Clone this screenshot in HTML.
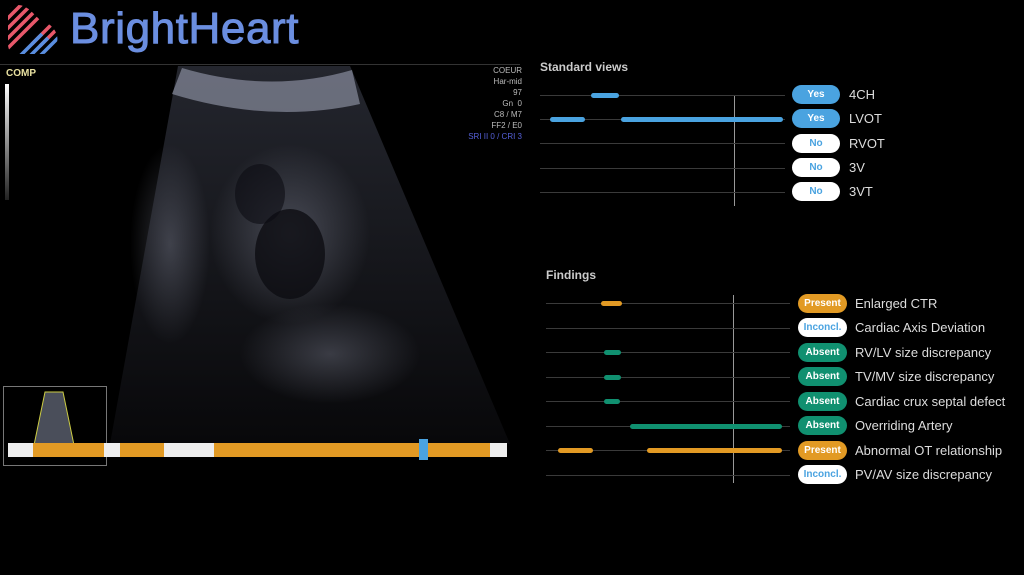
<!DOCTYPE html><html><head><style>
body{margin:0;width:1024px;height:575px;background:#000;overflow:hidden;position:relative;font-family:"Liberation Sans",sans-serif}
.a{position:absolute}
.ln{position:absolute;height:1px;background:#3a3a3a}
.bar{position:absolute;height:5px;border-radius:3px}
.pill{position:absolute;height:19px;border-radius:10px;font-size:10px;font-weight:bold;text-align:center;line-height:19px;box-sizing:border-box}
.lb{position:absolute;color:#ddd;font-size:13px}
.ov{position:absolute;right:0;color:#bbb;font-size:8px;text-align:right}
</style></head><body>
<svg class="a" style="left:6px;top:4px" width="54" height="52" viewBox="0 0 54 52">
<defs><clipPath id="c"><path d="M10 1 Q18 0 26 8 L34 16 Q42 18 47 24 Q54 32 50 42 Q46 50 36 50 L12 50 Q2 50 2 40 L2 12 Q2 3 10 1Z"/></clipPath></defs>
<g clip-path="url(#c)" stroke-width="3.6">
<g stroke="#e8586a"><line x1="-10" y1="16" x2="16" y2="-10"/><line x1="-10" y1="26" x2="26" y2="-10"/><line x1="-10" y1="36" x2="36" y2="-10"/><line x1="-10" y1="46" x2="46" y2="-10"/><line x1="-10" y1="56" x2="56" y2="-10"/><line x1="26" y1="40" x2="66" y2="0"/><line x1="34" y1="42" x2="66" y2="10"/></g>
<g stroke="#5a8ee0"><line x1="6" y1="60" x2="36" y2="30"/><line x1="16" y1="60" x2="42" y2="34"/><line x1="26" y1="60" x2="56" y2="30"/><line x1="36" y1="60" x2="66" y2="30"/></g></g></svg>
<div class="a" style="left:70px;top:4px;font-size:44px;color:#6b8ee0;letter-spacing:0.6px;-webkit-text-stroke:1px #6b8ee0">BrightHeart</div>
<div class="a" style="left:0;top:64px;width:520px;height:1px;background:#333"></div>
<div class="a" style="left:6px;top:68px;color:#e8e0a0;font-size:10px;font-weight:bold">COMP</div>
<div class="a" style="left:5px;top:84px;width:4px;height:116px;background:linear-gradient(#fff,#222)"></div>
<svg class="a" style="left:0;top:64px" width="520" height="400">
<defs><linearGradient id="g" x1="0" y1="0" x2="0" y2="1"><stop offset="0" stop-color="#24262e"/><stop offset="1" stop-color="#08080a"/></linearGradient>
<radialGradient id="r"><stop offset="0" stop-color="#8a8ea0" stop-opacity=".7"/><stop offset="1" stop-color="#8a8ea0" stop-opacity="0"/></radialGradient></defs>
<path d="M178 2 L350 2 L510 380 L110 380Z" fill="url(#g)"/>
<path d="M182 4 Q270 30 352 6 L360 40 Q270 60 172 30Z" fill="#9a9eb0" opacity=".6"/>
<ellipse cx="290" cy="170" rx="80" ry="90" fill="url(#r)" opacity=".6"/>
<ellipse cx="170" cy="180" rx="40" ry="100" fill="url(#r)" opacity=".5"/>
<ellipse cx="330" cy="290" rx="90" ry="50" fill="url(#r)" opacity=".5"/>
<ellipse cx="290" cy="190" rx="35" ry="45" fill="#0c0c12" opacity=".8"/>
<ellipse cx="260" cy="130" rx="25" ry="30" fill="#0c0c12" opacity=".6"/>
</svg>
<div class="a" style="left:440px;top:66px;width:82px;height:80px">
<div class="ov" style="top:0">COEUR</div><div class="ov" style="top:11px">Har-mid</div><div class="ov" style="top:22px">97</div><div class="ov" style="top:33px">Gn&nbsp;&nbsp;0</div><div class="ov" style="top:44px">C8 / M7</div><div class="ov" style="top:55px">FF2 / E0</div><div class="ov" style="top:66px;color:#5560d8">SRI II 0 / CRI 3</div></div>
<div class="a" style="left:3px;top:386px;width:102px;height:78px;border:1px solid #777;background:#000"></div>
<svg class="a" style="left:30px;top:390px" width="50" height="70"><path d="M15 2 L33 2 L45 60 L3 60Z" fill="#4a4e5a" stroke="#cc4"/></svg>
<div class="a" style="left:8px;top:443px;width:499px;height:14px;background:#eee"></div>
<div class="a" style="left:33px;top:443px;width:71px;height:14px;background:#e29a24"></div>
<div class="a" style="left:120px;top:443px;width:44px;height:14px;background:#e29a24"></div>
<div class="a" style="left:214px;top:443px;width:276px;height:14px;background:#e29a24"></div>
<div class="a" style="left:419px;top:439px;width:9px;height:21px;background:#4aa3e0"></div>

<div class="a" style="left:540px;top:60px;color:#ccc;font-size:12px;font-weight:bold">Standard views</div>
<div class="a" style="left:734px;top:96px;width:1px;height:110px;background:#999"></div>
<div class="ln" style="left:540px;top:95px;width:245px"></div>
<div class="ln" style="left:540px;top:119px;width:245px"></div>
<div class="ln" style="left:540px;top:143px;width:245px"></div>
<div class="ln" style="left:540px;top:168px;width:245px"></div>
<div class="ln" style="left:540px;top:192px;width:245px"></div>
<div class="bar" style="left:591px;top:93px;width:28px;background:#4aa3e0"></div>
<div class="bar" style="left:550px;top:117px;width:35px;background:#4aa3e0"></div>
<div class="bar" style="left:621px;top:117px;width:162px;background:#4aa3e0"></div>
<div class="pill" style="left:792px;top:85px;width:48px;background:#4aa3e0;color:#fff">Yes</div>
<div class="pill" style="left:792px;top:109px;width:48px;background:#4aa3e0;color:#fff">Yes</div>
<div class="pill" style="left:792px;top:134px;width:48px;background:#fff;color:#4aa3e0">No</div>
<div class="pill" style="left:792px;top:158px;width:48px;background:#fff;color:#4aa3e0">No</div>
<div class="pill" style="left:792px;top:182px;width:48px;background:#fff;color:#4aa3e0">No</div>
<div class="lb" style="left:849px;top:87px">4CH</div>
<div class="lb" style="left:849px;top:111px">LVOT</div>
<div class="lb" style="left:849px;top:136px">RVOT</div>
<div class="lb" style="left:849px;top:160px">3V</div>
<div class="lb" style="left:849px;top:184px">3VT</div>

<div class="a" style="left:546px;top:268px;color:#ccc;font-size:12px;font-weight:bold">Findings</div>
<div class="a" style="left:733px;top:295px;width:1px;height:188px;background:#999"></div>
<div class="ln" style="left:546px;top:303px;width:244px"></div>
<div class="ln" style="left:546px;top:328px;width:244px"></div>
<div class="ln" style="left:546px;top:352px;width:244px"></div>
<div class="ln" style="left:546px;top:377px;width:244px"></div>
<div class="ln" style="left:546px;top:401px;width:244px"></div>
<div class="ln" style="left:546px;top:426px;width:244px"></div>
<div class="ln" style="left:546px;top:450px;width:244px"></div>
<div class="ln" style="left:546px;top:475px;width:244px"></div>
<div class="bar" style="left:601px;top:301px;width:21px;background:#e29a24"></div>
<div class="bar" style="left:604px;top:350px;width:17px;background:#109070"></div>
<div class="bar" style="left:604px;top:375px;width:17px;background:#109070"></div>
<div class="bar" style="left:604px;top:399px;width:16px;background:#109070"></div>
<div class="bar" style="left:630px;top:424px;width:152px;background:#109070"></div>
<div class="bar" style="left:558px;top:448px;width:35px;background:#e29a24"></div>
<div class="bar" style="left:647px;top:448px;width:135px;background:#e29a24"></div>
<div class="pill" style="left:798px;top:294px;width:49px;background:#e29a24;color:#fff">Present</div>
<div class="pill" style="left:798px;top:318px;width:49px;background:#fff;color:#4aa3e0">Inconcl.</div>
<div class="pill" style="left:798px;top:343px;width:49px;background:#109070;color:#fff">Absent</div>
<div class="pill" style="left:798px;top:367px;width:49px;background:#109070;color:#fff">Absent</div>
<div class="pill" style="left:798px;top:392px;width:49px;background:#109070;color:#fff">Absent</div>
<div class="pill" style="left:798px;top:416px;width:49px;background:#109070;color:#fff">Absent</div>
<div class="pill" style="left:798px;top:441px;width:49px;background:#e29a24;color:#fff">Present</div>
<div class="pill" style="left:798px;top:465px;width:49px;background:#fff;color:#4aa3e0">Inconcl.</div>
<div class="lb" style="left:855px;top:296px">Enlarged CTR</div>
<div class="lb" style="left:855px;top:320px">Cardiac Axis Deviation</div>
<div class="lb" style="left:855px;top:345px">RV/LV size discrepancy</div>
<div class="lb" style="left:855px;top:369px">TV/MV size discrepancy</div>
<div class="lb" style="left:855px;top:394px">Cardiac crux septal defect</div>
<div class="lb" style="left:855px;top:418px">Overriding Artery</div>
<div class="lb" style="left:855px;top:443px">Abnormal OT relationship</div>
<div class="lb" style="left:855px;top:467px">PV/AV size discrepancy</div>
</body></html>
